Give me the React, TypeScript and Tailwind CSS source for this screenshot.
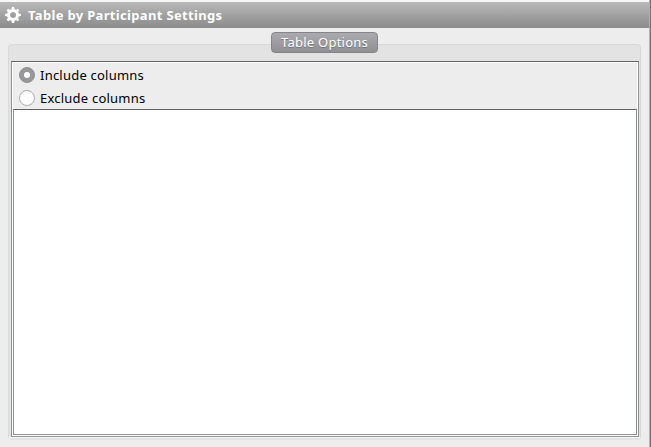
import React from "react";

const teeth = [0, 45, 90, 135, 180, 225, 270, 315];

function Gear() {
  return (
    <svg className="ml-[5px] h-4 w-4 shrink-0" viewBox="0 0 16 16">
      <circle cx="8" cy="8" r="4.5" fill="none" stroke="#fff" strokeWidth="3" />
      {teeth.map((a) => (
        <path key={a} d="M6.4 3 L6.9 0.1 H9.1 L9.6 3Z" fill="#fff" transform={`rotate(${a} 8 8)`} />
      ))}
    </svg>
  );
}

function Radio({ label, checked }: { label: string; checked?: boolean }) {
  return (
    <div className="flex h-[23px] items-center">
      {checked ? (
        <span className="flex h-4 w-4 items-center justify-center rounded-full border border-[#909094] bg-[#98989c]">
          <span className="h-[6px] w-[6px] rounded-full bg-white" />
        </span>
      ) : (
        <span className="h-4 w-4 rounded-full border border-[#adadad] bg-white" />
      )}
      <span className="ml-[5px] whitespace-nowrap text-[13px] leading-4 tracking-[0.22px] text-black">{label}</span>
    </div>
  );
}

export default function App() {
  return (
    <div className="flex h-[447px] w-[651px] overflow-hidden bg-[#ededed] font-['Noto_Sans','Open_Sans',sans-serif]">
      <div className="flex h-full w-[649px] flex-col">
        <div className="h-[2px] shrink-0 bg-[#f7f7f7]" />
        <header className="flex h-[26px] shrink-0 items-center bg-linear-to-b from-[#b9b9b9] to-[#8b8b8b]">
          <Gear />
          <h1 className="ml-[7px] whitespace-nowrap text-[13px] font-bold leading-4 tracking-[0.33px] text-white">
            Table by Participant Settings
          </h1>
        </header>
        <main className="mx-2 mt-4 flex h-[396px] w-[633px] flex-col rounded-[4px] border border-[#d9d9d9] border-b-[#e3e3e3] bg-[#e3e3e3] px-[2px]">
          <div className="-mt-[13px] flex h-[29px] shrink-0 justify-center">
            <button className="flex h-[21px] w-[107px] justify-center rounded-[4px] border border-[#858589] bg-linear-to-b from-[#aaaaaf] to-[#8f8f94] text-[13px] leading-[19px] tracking-[0.25px] whitespace-nowrap text-white [text-shadow:0_1px_0_#77777b]">
              Table Options
            </button>
          </div>
          <section className="flex h-[376px] w-[628px] shrink-0 flex-col border border-[#919591] border-t-[#636363] bg-white px-px pb-px">
            <div className="h-[47px] shrink-0 border-t border-white bg-[#ededed] pl-[6px]">
              <Radio label="Include columns" checked />
              <Radio label="Exclude columns" />
            </div>
            <div className="flex-1 border border-[#919591] border-t-[#636363] bg-white" />
          </section>
          <div className="-mx-[2px] h-px shrink-0 bg-[#f8f8f8]" />
        </main>
      </div>
      <div className="w-px bg-[#b0b0b0]" />
      <div className="w-px bg-[#747474]" />
    </div>
  );
}
